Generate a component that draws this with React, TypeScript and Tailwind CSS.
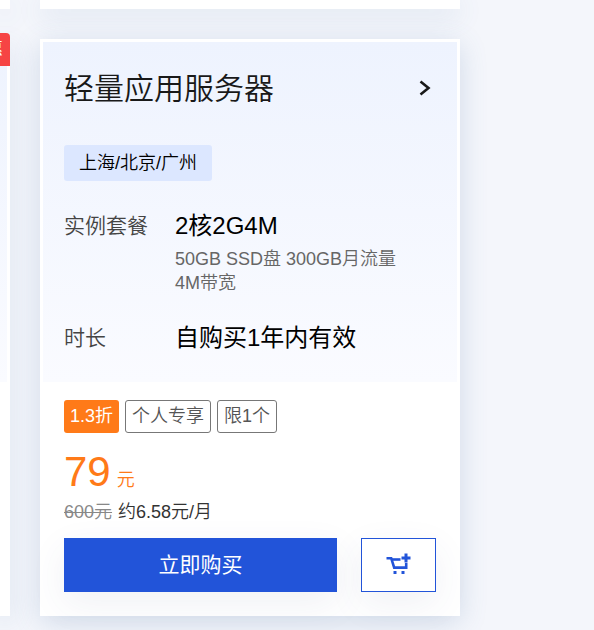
import React from "react";

const cardShadow = "shadow-[0_6px_26px_rgba(70,110,160,0.2)]";

function CartPlusIcon() {
  return (
    <svg width="26" height="24" viewBox="0 0 26 24" fill="none" stroke="#2254d9" aria-hidden="true">
      <path d="M0.5 5.2H5.2L8.2 14.6H20.2V10" strokeWidth="2.6" />
      <path d="M6 6.500H14.500" strokeWidth="2.6" />
      <path d="M20 0.500V9.500M15.500 5H24.500" strokeWidth="3" />
      <path d="M7.500 19.500h3M15.500 19.500h3" strokeWidth="3" />
    </svg>
  );
}

function Spec({ label, children }: { label: string; children: React.ReactNode }) {
  return (
    <div className="flex">
      <dt className="w-[111px] shrink-0 text-[21px] leading-9 font-[350] text-[#444]">{label}</dt>
      <dd className="min-w-0 flex-1">{children}</dd>
    </div>
  );
}

function ProductCard() {
  return (
    <article className={`border-[3px] border-white bg-white ${cardShadow}`}>
      <div className="bg-linear-to-b from-[#eef3fe] to-[#fafbff] px-[21px] pt-[25px] pb-[26px]">
        <a href="#server" className="flex items-center justify-between text-[#191919]">
          <h2 className="text-[30px] leading-[44px] font-[350]">轻量应用服务器</h2>
          <svg width="24" height="24" viewBox="0 0 24 24" fill="none" stroke="#191919" strokeWidth="2.6" aria-hidden="true">
            <path d="M8.500 4.500L16.500 11L8.500 17.500" />
          </svg>
        </a>
        <p className="mt-[34px] w-fit rounded-[3px] bg-[#dce7ff] px-[15px] text-[18px] leading-9 font-[350] text-black">
          上海/北京/广州
        </p>
        <dl className="mt-[27px]">
          <Spec label="实例套餐">
            <p className="text-[24px] leading-9 text-black">2核2G4M</p>
            <p className="mt-[3px] text-[18px] leading-6 font-[350] text-[#666]">
              50GB SSD盘 300GB月流量
              <br />
              4M带宽
            </p>
          </Spec>
          <div className="mt-[25px]">
            <Spec label="时长">
              <p className="text-[24px] leading-9 text-black">自购买1年内有效</p>
            </Spec>
          </div>
        </dl>
      </div>
      <div className="px-[21px] pt-[18px] pb-[21px]">
        <div className="flex gap-[6px] text-[18px] leading-[31px]">
          <span className="rounded-[3px] bg-[#ff7a18] px-[6px] py-px text-white">1.3折</span>
          <span className="rounded-[3px] border border-[#777] px-[6px] font-[350] text-[#555]">个人专享</span>
          <span className="rounded-[3px] border border-[#777] px-[6px] font-[350] text-[#555]">限1个</span>
        </div>
        <p className="mt-[15px] flex items-baseline gap-[6px] text-[#ff7a18]">
          <span className="text-[42px] leading-[48px]">79</span>
          <span className="text-[18px] leading-6 font-[350]">元</span>
        </p>
        <p className="mt-1 flex gap-[6px] text-[18px] leading-6 font-[350] text-[#333]">
          <del className="text-[#888]">600元</del>
          <span>约6.58元/月</span>
        </p>
        <div className="mt-[14px] flex gap-6">
          <button type="button" className="h-[54px] flex-1 bg-[#2254d9] text-[21px] leading-8 text-white shadow-[0_12px_36px_rgba(60,80,130,0.08)]">
            立即购买
          </button>
          <button
            type="button"
            aria-label="加入购物车"
            className="flex h-[54px] w-[75px] items-center justify-center border border-[#2254d9] bg-white shadow-[0_12px_36px_rgba(60,80,130,0.08)]"
          >
            <CartPlusIcon />
          </button>
        </div>
      </div>
    </article>
  );
}

export default function App() {
  return (
    <main
      className="flex h-screen gap-[30px] overflow-hidden bg-[#f4f6fb]"
      style={{ fontFamily: '"Liberation Sans", "Noto Sans CJK SC", sans-serif' }}
    >
      <div className="flex w-[10px] shrink-0 flex-col gap-[30px]">
        <div className={`h-[9px] shrink-0 bg-white ${cardShadow}`} />
        <div className={`relative flex h-[577px] shrink-0 flex-col border-y-[3px] border-r-[3px] border-white bg-white ${cardShadow}`}>
          <div className="h-[340px] bg-linear-to-b from-[#eef3fe] to-[#fafbff]" />
          <span className="absolute -top-[9px] -right-[3px] rounded-tr-[4px] bg-[#f64444] pr-[7px] text-[18px] leading-[33px] text-white">
            惠
          </span>
        </div>
      </div>
      <div className="flex max-w-[420px] min-w-0 flex-1 flex-col gap-[30px]">
        <div className={`h-[9px] shrink-0 bg-white ${cardShadow}`} />
        <ProductCard />
      </div>
    </main>
  );
}
